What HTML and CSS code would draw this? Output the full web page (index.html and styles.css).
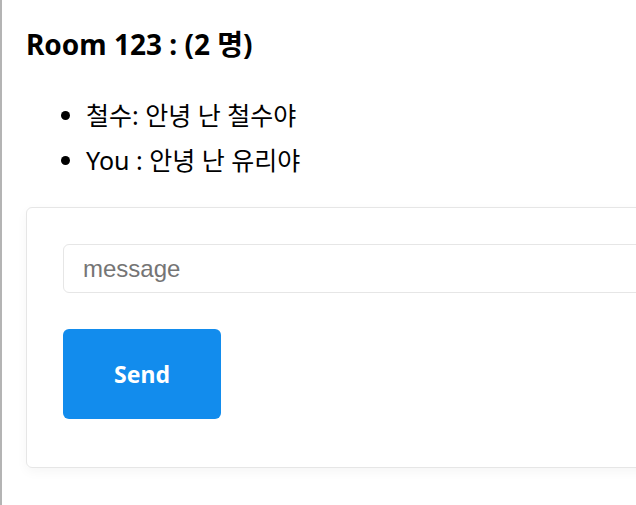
FILE: index.html
```html
<!DOCTYPE html>
<html lang="ko">
  <head>
    <meta charset="UTF-8" />
    <meta name="viewport" content="width=device-width, initial-scale=1.0" />
    <title>Chat Room</title>
    <link rel="stylesheet" href="styles.css">
  </head>
  <body>
    <div class="room">
      <h2 class="room-title">Room 123 : (2 명)</h2>
      <ul class="messages">
        <li>철수: 안녕 난 철수야</li>
        <li>You : 안녕 난 유리야</li>
      </ul>
      <form class="chat-form">
        <input class="chat-input" type="text" placeholder="message" />
        <button class="send-btn" type="button">Send</button>
      </form>
    </div>
  </body>
</html>
```

FILE: styles.css
```css
html,
body {
  overflow: hidden;
}
body {
  margin: 0;
  min-height: 100vh;
  border-left: 2px solid #b4b4b4;
  background: #fff;
  color: #000;
  font-family: "Noto Sans", "Noto Sans CJK KR", sans-serif;
}
.room {
  width: 800px;
  padding: 0 24px;
}
.room-title {
  margin: 0;
  padding-top: 26px;
  font-size: 28px;
  line-height: 36px;
  font-weight: 700;
}
.messages {
  display: flex;
  flex-direction: column;
  gap: 11px;
  margin: 36px 0 0;
  padding-left: 60px;
  font-size: 25px;
  line-height: 34px;
}
.chat-form {
  margin-top: 30px;
  padding: 36px 36px 48px;
  border: 1px solid #e6e6e6;
  border-radius: 6px;
  box-shadow: 0 4px 12px rgba(0, 0, 0, 0.04);
}
.chat-input {
  display: block;
  box-sizing: border-box;
  width: 100%;
  height: 49px;
  padding: 0 19px;
  border: 1px solid #e6e6e6;
  border-radius: 6px;
  font-family: "Liberation Sans", Arial, sans-serif;
  font-size: 24px;
  outline: none;
}
.chat-input::placeholder {
  color: #757575;
}
.send-btn {
  display: block;
  margin-top: 36px;
  width: 158px;
  height: 90px;
  border: none;
  border-radius: 6px;
  background: #128ced;
  color: #fff;
  font-family: "Noto Sans", sans-serif;
  font-size: 23px;
  font-weight: 700;
}
```
